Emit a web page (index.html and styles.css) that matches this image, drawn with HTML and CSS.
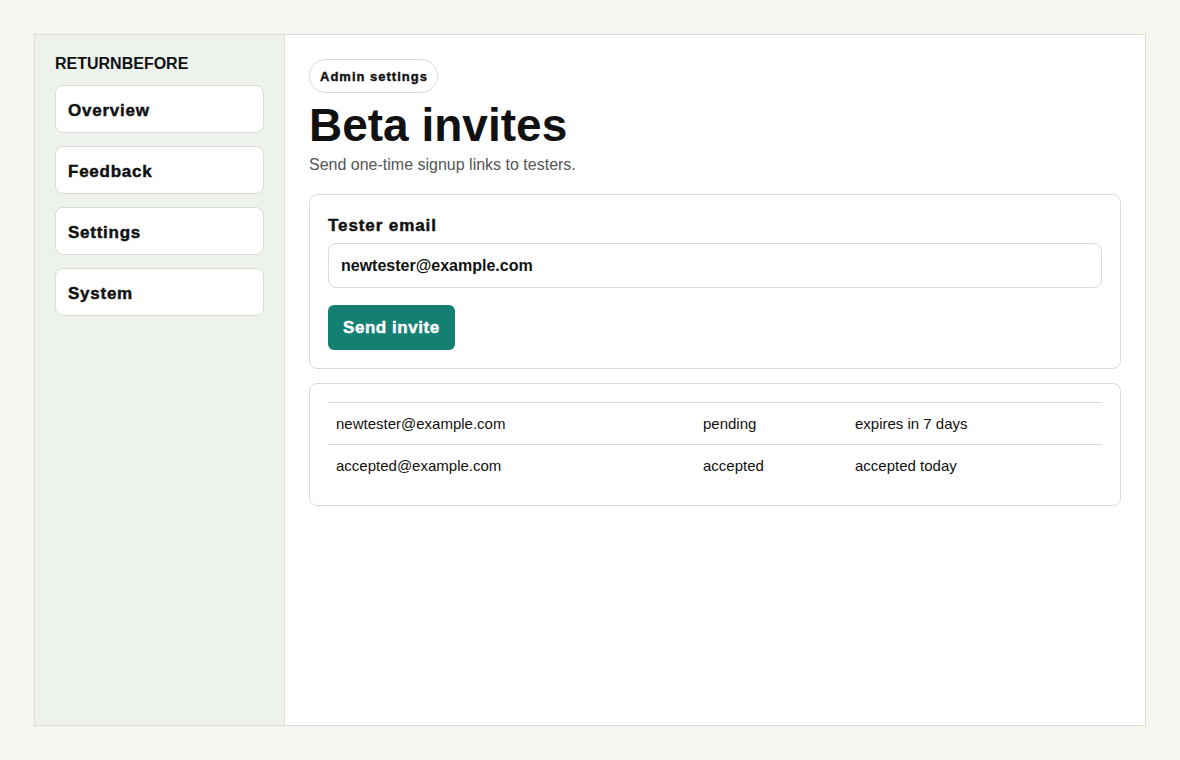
FILE: index.html
```html
<!DOCTYPE html>
<html lang="en">
<head>
<meta charset="utf-8">
<title>Beta invites</title>
<link rel="stylesheet" href="styles.css">
</head>
<body>
<div class="shell">
  <aside class="sidebar">
    <div class="brand">RETURNBEFORE</div>
    <nav class="nav">
      <a class="nav-item">Overview</a>
      <a class="nav-item">Feedback</a>
      <a class="nav-item">Settings</a>
      <a class="nav-item">System</a>
    </nav>
  </aside>
  <main class="main">
    <span class="pill">Admin settings</span>
    <h1 class="title">Beta invites</h1>
    <p class="subtitle">Send one-time signup links to testers.</p>
    <section class="card form-card">
      <label class="label">Tester email</label>
      <div class="input">newtester@example.com</div>
      <button class="btn">Send invite</button>
    </section>
    <section class="card list-card">
      <table class="invites">
        <tr>
          <td class="c-email">newtester@example.com</td>
          <td class="c-status">pending</td>
          <td class="c-exp">expires in 7 days</td>
        </tr>
        <tr>
          <td class="c-email">accepted@example.com</td>
          <td class="c-status">accepted</td>
          <td class="c-exp">accepted today</td>
        </tr>
      </table>
    </section>
  </main>
</div>
</body>
</html>
```

FILE: styles.css
```css
* { box-sizing: border-box; }
html, body { margin: 0; padding: 0; }
body {
  background: #f6f6f1;
  font-family: "Liberation Sans", Arial, sans-serif;
  color: #111;
  padding: 34px;
  height: 100vh;
}
.shell {
  display: flex;
  height: 100%;
  border: 1px solid #dcdcd3;
  background: #fff;
}
.sidebar {
  width: 250px;
  flex: none;
  background: #edf2ec;
  border-right: 1px solid #dcdcd3;
  padding: 20px 20px;
}
.brand {
  font-size: 16px;
  font-weight: 700;
  line-height: 18px;
  margin-bottom: 12px;
}
.nav { display: flex; flex-direction: column; gap: 13px; }
.nav-item {
  display: block;
  background: #fff;
  border: 1px solid #dcdcd3;
  border-radius: 8px;
  height: 48px;
  padding: 3px 12px 0;
  font-size: 17px;
  font-weight: 700;
  letter-spacing: 0.75px;
  -webkit-text-stroke: 0.45px #111;
  line-height: 43px;
  color: #111;
}
.main {
  flex: 1;
  padding: 24px 24px;
}
.pill {
  display: inline-block;
  border: 1px solid #dcdcd3;
  border-radius: 999px;
  height: 34px;
  line-height: 32px;
  padding: 1px 9px 0 10px;
  font-size: 13px;
  font-weight: 700;
  letter-spacing: 1px;
  -webkit-text-stroke: 0.4px #111;
}
.title {
  margin: 4px 0 0;
  font-size: 46px;
  line-height: 56px;
  font-weight: 700;
}
.subtitle {
  margin: 0 0 20px;
  padding-top: 3px;
  font-size: 16px;
  line-height: 18px;
  color: #555;
}
.card {
  border: 1px solid #dcdcd3;
  border-radius: 8px;
  padding: 18px;
  background: #fff;
}
.form-card { margin-bottom: 14px; }
.label {
  display: block;
  font-size: 17px;
  font-weight: 700;
  letter-spacing: 0.9px;
  -webkit-text-stroke: 0.45px #111;
  line-height: 22px;
  margin-top: 2px;
  margin-bottom: 6px;
}
.input {
  border: 1px solid #dcdcd3;
  border-radius: 8px;
  height: 45px;
  line-height: 43px;
  padding: 0 12px;
  font-size: 16px;
  font-weight: 700;
  margin-bottom: 17px;
}
.btn {
  display: block;
  background: #138072;
  color: #fff;
  border: 0;
  border-radius: 6px;
  height: 45px;
  padding: 0 15px;
  font-family: inherit;
  font-size: 17px;
  font-weight: 700;
  letter-spacing: 0.55px;
  -webkit-text-stroke: 0.45px #fff;
}
.invites {
  width: 100%;
  border-collapse: collapse;
  font-size: 15px;
}
.invites td {
  border-top: 1px solid #dcdcd3;
  height: 42px;
  padding: 0 8px;
  line-height: 17px;
  vertical-align: middle;
}
.c-email { width: 367px; }
.c-status { width: 152px; }
```
